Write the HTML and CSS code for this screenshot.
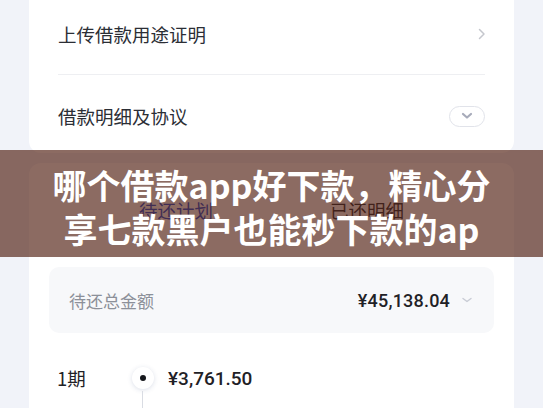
FILE: index.html
```html
<!DOCTYPE html>
<html lang="zh-CN">
<head>
<meta charset="utf-8">
<title>借款详情</title>
<link rel="stylesheet" href="styles.css">
</head>
<body>
<div class="page">
  <section class="card card-top">
    <div class="row row-first">
      <span class="row-label">上传借款用途证明</span>
      <svg class="chev-right" width="8" height="12" viewBox="0 0 8 12"><path d="M1.5 1.5 L6 6 L1.5 10.5" fill="none" stroke="#c5c7cd" stroke-width="1.5" stroke-linecap="round" stroke-linejoin="round"/></svg>
    </div>
    <div class="divider"></div>
    <div class="row row-second">
      <span class="row-label">借款明细及协议</span>
      <span class="pill">
        <svg width="12" height="8" viewBox="0 0 12 8"><path d="M2 2 L6 5.5 L10 2" fill="none" stroke="#a7abba" stroke-width="2.2" stroke-linecap="round" stroke-linejoin="round"/></svg>
      </span>
    </div>
  </section>

  <section class="card card-plan">
    <div class="tabs">
      <span class="tab tab-active">待还计划</span>
      <span class="tab">已还明细</span>
    </div>
    <div class="total">
      <span class="total-label">待还总金额</span>
      <span class="total-right">
        <span class="total-amount">¥45,138.04</span>
        <svg width="12" height="8" viewBox="0 0 12 8"><path d="M2 2.5 L6 5.5 L10 2.5" fill="none" stroke="#c9ccd5" stroke-width="1.4" stroke-linecap="round" stroke-linejoin="round"/></svg>
      </span>
    </div>
    <div class="plan">
      <div class="plan-row">
        <span class="period">1期</span>
        <span class="node"><span class="node-dot"></span></span>
        <span class="amount">¥3,761.50</span>
      </div>
      <div class="plan-sub">
        <span class="sub-date">04/15/2024</span>
        <span class="sub-line"></span>
        <span class="sub-text">本金 ¥3,512.00</span>
        <span class="sub-text">利息 ¥249.50</span>
      </div>
    </div>
  </section>
</div>

<div class="banner">
  <div class="banner-line">哪个借款app好下款，精心分</div>
  <div class="banner-line">享七款黑户也能秒下款的ap</div>
</div>
</body>
</html>
```

FILE: styles.css
```css
* { box-sizing: border-box; }

html, body {
  margin: 0;
  height: 100%;
  overflow: hidden;
}

body {
  background: #f1f3f9;
  font-family: "Noto Sans CJK SC", "Noto Sans", sans-serif;
  color: #2a2d33;
}

.page {
  padding: 0 29px;
}

.card {
  background: #ffffff;
  border-radius: 12px;
}

.card-top {
  border-radius: 0 0 12px 12px;
  padding: 0 29px;
  margin-top: -12px;
}

.row {
  display: flex;
  align-items: center;
  justify-content: space-between;
}

.row-first {
  height: 86px;
  padding-top: 6px;
}

.row-second {
  height: 78px;
  padding-top: 4px;
}

.row-label {
  font-size: 18.5px;
  line-height: 24px;
  color: #2b2e35;
}

.chev-right {
  margin-right: -1px;
}

.divider {
  height: 1px;
  background: #eeeff2;
}

.pill {
  width: 36px;
  height: 21px;
  border: 1px solid #e1e3ea;
  border-radius: 11px;
  display: flex;
  align-items: center;
  justify-content: center;
}

.card-plan {
  margin-top: 10px;
  padding: 0 20px;
  height: 300px;
}

.tabs {
  display: flex;
  justify-content: center;
  gap: 117px;
  padding-top: 34px;
  height: 104px;
}

.tab {
  font-size: 18.5px;
  line-height: 26px;
  color: #33363d;
}

.tab-active {
  color: #2f55d4;
}

.total {
  height: 66px;
  background: #f7f8fa;
  border-radius: 10px;
  display: flex;
  align-items: center;
  justify-content: space-between;
  padding: 0 21px 0 20px;
}

.total-label {
  font-size: 17px;
  color: #8c9099;
}

.total-right {
  display: flex;
  align-items: center;
  gap: 11px;
}

.total-amount {
  font-family: Roboto, "Noto Sans", sans-serif;
  font-weight: 500;
  font-size: 18px;
  color: #1f2126;
  letter-spacing: 0.2px;
}

.plan {
  padding: 32px 0 0 8px;
}

.plan-row {
  display: flex;
  align-items: center;
  height: 26px;
}

.period {
  width: 75px;
  font-size: 18.5px;
  color: #1f2126;
}

.node {
  width: 22px;
  height: 22px;
  border-radius: 50%;
  background: #ffffff;
  box-shadow: 0 1px 5px rgba(40, 60, 120, 0.16);
  display: flex;
  align-items: center;
  justify-content: center;
}

.node-dot {
  width: 6px;
  height: 6px;
  border-radius: 50%;
  background: #15171c;
}

.amount {
  margin-left: 14px;
  font-family: Roboto, "Noto Sans", sans-serif;
  font-weight: 500;
  font-size: 19px;
  color: #1f2126;
}

.plan-sub {
  display: flex;
  align-items: flex-start;
  height: 40px;
}

.sub-date {
  width: 75px;
  font-size: 13px;
  color: #a3a7b0;
  padding-top: 14px;
}

.sub-line {
  width: 22px;
  height: 40px;
  position: relative;
}

.sub-line::before {
  content: "";
  position: absolute;
  left: 10px;
  top: 0;
  width: 1px;
  height: 40px;
  background: #d9dce3;
}

.sub-text {
  margin-left: 14px;
  width: 101px;
  font-size: 13px;
  color: #a3a7b0;
  padding-top: 14px;
}

.banner {
  position: absolute;
  left: 0;
  right: 0;
  top: 150px;
  height: 107px;
  background: rgba(75, 24, 10, 0.64);
  display: flex;
  flex-direction: column;
  align-items: center;
  justify-content: center;
  padding-top: 6px;
}

.banner-line {
  font-size: 34px;
  line-height: 44px;
  font-weight: 700;
  color: #ffffff;
  white-space: nowrap;
}
```
